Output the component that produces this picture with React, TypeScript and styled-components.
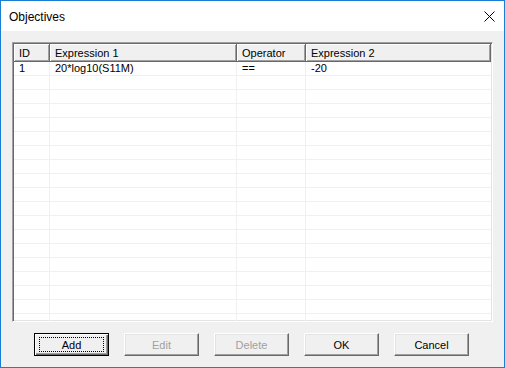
import React from "react";
import styled, { createGlobalStyle, css } from "styled-components";

const GlobalStyle = createGlobalStyle`
  html, body {
    margin: 0;
    padding: 0;
    background: #ffffff;
  }
  * {
    box-sizing: border-box;
  }
`;

const uiFont = `"Liberation Sans", Arial, sans-serif`;

const Window = styled.div`
  width: 505px;
  height: 368px;
  display: flex;
  flex-direction: column;
  border: 1px solid #1a7fd4;
  background: #f0f0f0;
  font-family: ${uiFont};
  font-size: 11px;
  color: #000;
`;

const TitleBar = styled.div`
  height: 30px;
  display: flex;
  align-items: center;
  padding: 0 9px 0 8px;
  background: #ffffff;
`;

const Title = styled.span`
  flex: 1;
  font-size: 12px;
  padding-top: 1px;
`;

const CloseIcon = () => (
  <svg width="11" height="11" viewBox="0 0 11 11">
    <path d="M0.5 0.5 L10.5 10.5 M10.5 0.5 L0.5 10.5" stroke="#000" strokeWidth="1" />
  </svg>
);

const Body = styled.div`
  flex: 1;
  display: flex;
  flex-direction: column;
  padding: 11px 11px 0;
`;

const ListView = styled.div`
  height: 280px;
  display: flex;
  flex-direction: column;
  overflow: hidden;
  background: #ffffff;
  border: 1px solid;
  border-color: #a0a0a0 #ffffff #ffffff #a0a0a0;
  box-shadow: inset 1px 1px 0 #696969, inset -1px -1px 0 #e3e3e3;
  padding: 1px;
`;

const columns = "36px 187px 69px 1fr";

const HeaderRow = styled.div`
  display: grid;
  grid-template-columns: ${columns};
  height: 18px;
  flex-shrink: 0;
`;

const HeaderCell = styled.div`
  display: flex;
  align-items: center;
  padding-left: 5px;
  background: #f0f0f0;
  border-right: 1px solid #696969;
  border-bottom: 1px solid #696969;
  box-shadow: inset 1px 1px 0 #ffffff, inset -1px -1px 0 #a0a0a0;
  white-space: nowrap;
`;

const Row = styled.div`
  display: grid;
  grid-template-columns: ${columns};
  height: 14px;
  flex-shrink: 0;
  border-bottom: 1px solid #f0f0f0;
`;

const Cell = styled.div`
  display: flex;
  align-items: center;
  padding-left: 5px;
  border-right: 1px solid #f0f0f0;
  white-space: nowrap;
  line-height: 13px;
  &:last-child {
    border-right: none;
  }
`;

const ButtonBar = styled.div`
  display: flex;
  gap: 15px;
  padding: 11px 0 0 22px;
`;

const Button = styled.button<{ $default?: boolean }>`
  width: 75px;
  height: 23px;
  padding: 0;
  font-family: ${uiFont};
  font-size: 11px;
  color: #000;
  background: #f0f0f0;
  border: 1px solid;
  border-color: #ffffff #696969 #696969 #ffffff;
  box-shadow: inset -1px -1px 0 #a0a0a0, inset 1px 1px 0 #e3e3e3;
  display: flex;
  align-items: center;
  justify-content: center;

  &:disabled {
    color: #a0a0a0;
  }

  ${(p) =>
    p.$default &&
    css`
      border-color: #000;
      box-shadow: inset 1px 1px 0 #ffffff, inset -1px -1px 0 #696969,
        inset -2px -2px 0 #a0a0a0;
    `}
`;

const FocusRect = styled.span`
  width: 65px;
  height: 15px;
  border: 1px dotted #000;
  display: flex;
  align-items: center;
  justify-content: center;
`;

const rows = [{ id: "1", expr1: "20*log10(S11M)", op: "==", expr2: "-20" }];
const totalRows = 19;

export default function App() {
  const filled = Array.from({ length: totalRows }, (_, i) => rows[i]);
  return (
    <>
      <GlobalStyle />
      <Window>
        <TitleBar>
          <Title>Objectives</Title>
          <CloseIcon />
        </TitleBar>
        <Body>
          <ListView>
            <HeaderRow>
              <HeaderCell>ID</HeaderCell>
              <HeaderCell>Expression 1</HeaderCell>
              <HeaderCell>Operator</HeaderCell>
              <HeaderCell>Expression 2</HeaderCell>
            </HeaderRow>
            {filled.map((r, i) => (
              <Row key={i}>
                <Cell>{r?.id}</Cell>
                <Cell>{r?.expr1}</Cell>
                <Cell>{r?.op}</Cell>
                <Cell>{r?.expr2}</Cell>
              </Row>
            ))}
          </ListView>
          <ButtonBar>
            <Button $default>
              <FocusRect>Add</FocusRect>
            </Button>
            <Button disabled>Edit</Button>
            <Button disabled>Delete</Button>
            <Button>OK</Button>
            <Button>Cancel</Button>
          </ButtonBar>
        </Body>
      </Window>
    </>
  );
}
